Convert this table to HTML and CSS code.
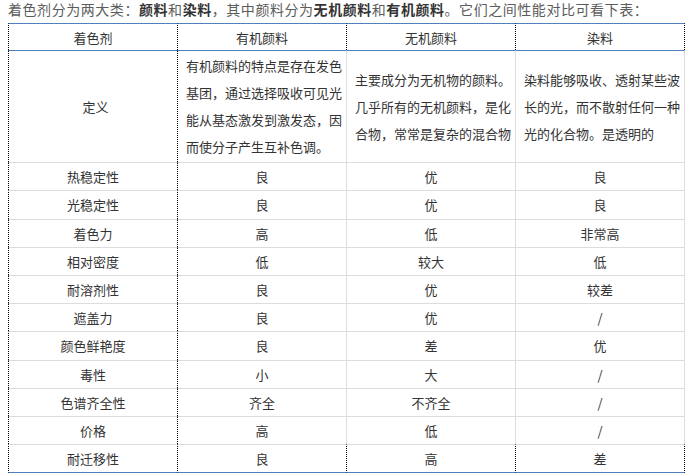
FILE: index.html
```html
<!DOCTYPE html>
<html lang="zh">
<head>
<meta charset="utf-8">
<link rel="stylesheet" href="styles.css">
</head>
<body>
<p class="intro">着色剂分为两大类：<b>颜料</b>和<b>染料</b>，其中颜料分为<b>无机颜料</b>和<b>有机颜料</b>。它们之间性能对比可看下表：</p>
<table class="cmp">
  <thead>
    <tr><th>着色剂</th><th>有机颜料</th><th>无机颜料</th><th>染料</th></tr>
  </thead>
  <tbody>
    <tr class="def">
      <td class="name">定义</td>
      <td>有机颜料的特点是存在发色基团，通过选择吸收可见光能从基态激发到激发态，因而使分子产生互补色调。</td>
      <td>主要成分为无机物的颜料。几乎所有的无机颜料，是化合物，常常是复杂的混合物</td>
      <td>染料能够吸收、透射某些波长的光，而不散射任何一种光的化合物。是透明的</td>
    </tr>
    <tr><td>热稳定性</td><td>良</td><td>优</td><td>良</td></tr>
    <tr><td>光稳定性</td><td>良</td><td>优</td><td>良</td></tr>
    <tr><td>着色力</td><td>高</td><td>低</td><td>非常高</td></tr>
    <tr><td>相对密度</td><td>低</td><td>较大</td><td>低</td></tr>
    <tr><td>耐溶剂性</td><td>良</td><td>优</td><td>较差</td></tr>
    <tr><td>遮盖力</td><td>良</td><td>优</td><td>/</td></tr>
    <tr><td>颜色鲜艳度</td><td>良</td><td>差</td><td>优</td></tr>
    <tr><td>毒性</td><td>小</td><td>大</td><td>/</td></tr>
    <tr><td>色谱齐全性</td><td>齐全</td><td>不齐全</td><td>/</td></tr>
    <tr><td>价格</td><td>高</td><td>低</td><td>/</td></tr>
    <tr class="last"><td>耐迁移性</td><td>良</td><td>高</td><td>差</td></tr>
  </tbody>
</table>
</body>
</html>
```
FILE: styles.css
```css
html, body {
  margin: 0;
  padding: 0;
  background: #fff;
}
body {
  padding: 0 8px;
  font-family: "Noto Sans CJK SC", "Noto Sans", sans-serif;
}
.intro {
  margin: 0;
  height: 23px;
  font-size: 14px;
  line-height: 18px;
  letter-spacing: 0.55px;
  color: #5c5c5c;
}
.intro b {
  color: #333;
  font-weight: bold;
}
.cmp {
  width: 677px;
  table-layout: fixed;
  border-collapse: separate;
  border-spacing: 0;
  font-size: 13px;
  color: #333;
}
.cmp th, .cmp td {
  width: 25%;
  text-align: center;
  vertical-align: middle;
  font-weight: normal;
  padding: 4px 8px;
  line-height: 19.2px;
  border-left: 1px solid #ddd;
  border-top: 1px solid #ddd;
}
.cmp th {
  padding: 4px 8px 3px;
  border-top: 1px solid #4f81bd;
  border-left: 1px dotted #000;
}
.cmp th:last-child {
  border-right: 1px dotted #000;
}
.cmp td:first-child,
.cmp td:nth-child(2) {
  border-left: 1px dotted #000;
}
.cmp td:last-child {
  border-right: 1px solid #ddd;
}
.cmp tbody tr:first-child td {
  border-top: 1px solid #4f81bd;
}
.cmp .def td {
  text-align: left;
  line-height: 27px;
  padding: 1px 3px 2px 8px;
}
.cmp .def td.name {
  text-align: center;
}
.cmp .last td {
  border-left: 1px dotted #000;
  border-bottom: 1px solid #4f81bd;
}
.cmp .last td:last-child {
  border-right: 1px dotted #000;
}
```
